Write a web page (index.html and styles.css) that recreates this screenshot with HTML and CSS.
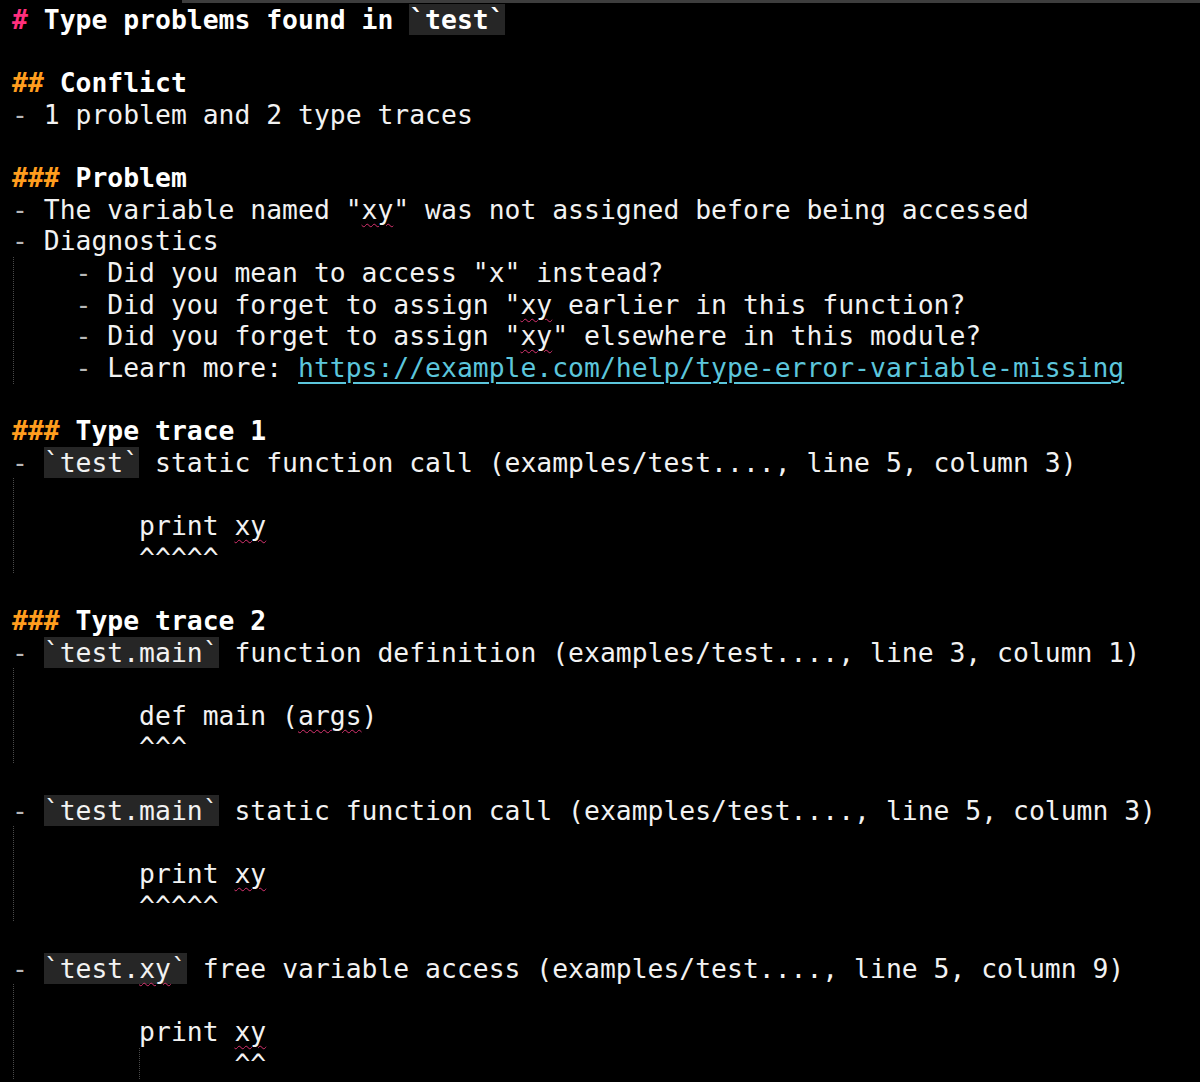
FILE: index.html
```html
<!DOCTYPE html>
<html lang="en">
<head>
<meta charset="utf-8">
<title>Type problems found in test</title>
<link rel="stylesheet" href="styles.css">
</head>
<body>
<div class="topbar"></div>
<main class="editor">
  <div class="line h1"><span class="m1">#</span> Type problems found in <code class="ic">`test`</code></div>
  <div class="line"> </div>
  <div class="line hd"><span class="m2">##</span> Conflict</div>
  <div class="line"><span class="dash">-</span> 1 problem and 2 type traces</div>
  <div class="line"> </div>
  <div class="line hd"><span class="m2">###</span> Problem</div>
  <div class="line"><span class="dash">-</span> The variable named "<span class="sq">xy</span>" was not assigned before being accessed</div>
  <div class="line"><span class="dash">-</span> Diagnostics</div>
  <div class="guide">
    <div class="line">    <span class="dash">-</span> Did you mean to access "x" instead?</div>
    <div class="line">    <span class="dash">-</span> Did you forget to assign "<span class="sq">xy</span> earlier in this function?</div>
    <div class="line">    <span class="dash">-</span> Did you forget to assign "<span class="sq">xy</span>" elsewhere in this module?</div>
    <div class="line">    <span class="dash">-</span> Learn more: <a class="link" href="#">https://example.com/help/type-error-variable-missing</a></div>
  </div>
  <div class="line"> </div>
  <div class="line hd"><span class="m2">###</span> Type trace 1</div>
  <div class="line"><span class="dash">-</span> <code class="ic">`test`</code> static function call (examples/test...., line 5, column 3)</div>
  <div class="guide">
    <div class="line"> </div>
    <div class="line">        print <span class="sq">xy</span></div>
    <div class="line">        ^^^^^</div>
  </div>
  <div class="line"> </div>
  <div class="line hd"><span class="m2">###</span> Type trace 2</div>
  <div class="line"><span class="dash">-</span> <code class="ic">`test.main`</code> function definition (examples/test...., line 3, column 1)</div>
  <div class="guide">
    <div class="line"> </div>
    <div class="line">        def main (<span class="sq">args</span>)</div>
    <div class="line">        ^^^</div>
  </div>
  <div class="line"> </div>
  <div class="line"><span class="dash">-</span> <code class="ic">`test.main`</code> static function call (examples/test...., line 5, column 3)</div>
  <div class="guide">
    <div class="line"> </div>
    <div class="line">        print <span class="sq">xy</span></div>
    <div class="line">        ^^^^^</div>
  </div>
  <div class="line"> </div>
  <div class="line"><span class="dash">-</span> <code class="ic">`test.<span class="sq">xy</span>`</code> free variable access (examples/test...., line 5, column 9)</div>
  <div class="guide">
    <div class="line"> </div>
    <div class="line">        print <span class="sq">xy</span></div>
    <div class="line"><span class="indent">        </span>      ^^</div>
  </div>
</main>
</body>
</html>
```
FILE: styles.css
```css
html, body {
  margin: 0;
  padding: 0;
  background: #000;
}
body {
  height: 1082px;
  overflow: hidden;
  font-family: "DejaVu Sans Mono", "Liberation Mono", monospace;
  font-size: 26.4px;
  color: #f2f2f2;
}
.topbar {
  height: 3px;
  margin-left: 182px;
  background: #3d3d3d;
}
.editor {
  padding: 1px 0 0 12px;
}
.line {
  white-space: pre;
  height: 31.625px;
  line-height: 31.625px;
}
.h1, .hd {
  font-weight: bold;
  color: #fff;
}
.m1 { color: #ff2f7d; }
.m2 { color: #ff9d1e; }
.dash {
  color: #b8b8b8;
}
.ic {
  font-family: inherit;
  font-size: inherit;
  background: #262626;
}
.sq {
  text-decoration: underline wavy #d8336f;
  text-decoration-thickness: 1px;
  text-underline-offset: 4px;
}
.link {
  color: #5cc6dc;
  text-decoration: underline;
  text-decoration-color: #5cc6dc;
  text-decoration-thickness: 2px;
  text-underline-offset: 5px;
}
.guide {
  margin-left: 1px;
  border-left: 1px dotted #4a4a4a;
}
.guide > .line {
  margin-left: -2px;
}
.indent {
  display: inline-block;
  height: 100%;
  vertical-align: top;
  border-right: 1px dotted #4a4a4a;
  margin-right: -1px;
}
```
